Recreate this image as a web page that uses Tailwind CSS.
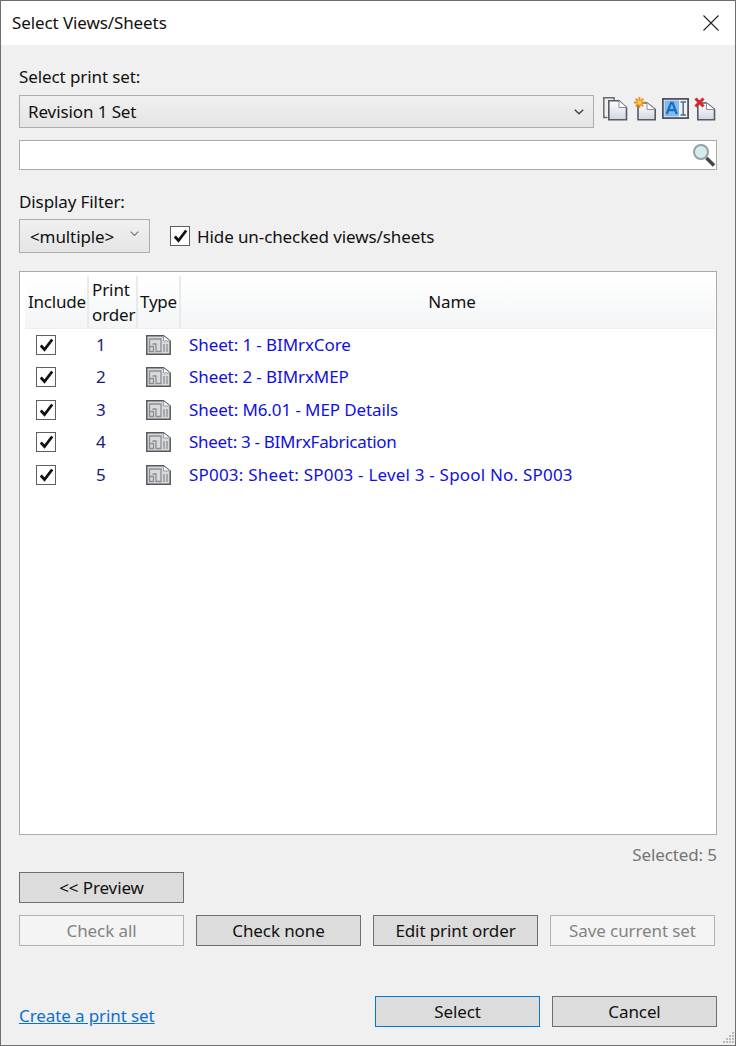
<!DOCTYPE html>
<html>
<head>
<meta charset="utf-8">
<script src="https://cdn.jsdelivr.net/npm/@tailwindcss/browser@4"></script>
</head>
<body class="m-0">
<div class="relative w-[736px] h-[1046px] overflow-hidden bg-[#f0f0f0] border border-[#6e6e6e] font-['Noto_Sans',sans-serif] text-[17px] leading-[22px] text-[#111] tracking-[-0.1px]">
  <header class="h-[44px] bg-white flex items-center justify-between pl-[11px] pr-[15px]">
    <span>Select Views/Sheets</span>
    <svg width="18" height="18" viewBox="0 0 18 18" stroke="#222" stroke-width="1.100" fill="none"><path d="M1.500 1.500 16.500 16.500M16.500 1.500 1.500 16.500"/></svg>
  </header>
  <main class="pl-[18px] pr-[18px] flex flex-col">
    <label class="mt-[21px] h-[22px]">Select print set:</label>
    <div class="mt-[7px] flex h-[33px] items-start">
      <div class="w-[575px] h-[33px] border border-[#adadad] bg-gradient-to-b from-[#f0f0f0] to-[#e5e5e5] flex items-center justify-between pl-[8px] pr-[9px]">
        <span class="mt-[1px]">Revision 1 Set</span>
        <svg width="10" height="6" viewBox="0 0 10 6" fill="none" stroke="#444" stroke-width="1.500"><path d="M.8.8 5 4.800 9.200.8"/></svg>
      </div>
      <div class="ml-[9px] pt-[2px] flex items-start">
        <!-- copy -->
        <svg width="25" height="24" viewBox="0 0 25 24" fill="none">
          <defs><linearGradient id="pg" x1="0" y1="0" x2="0" y2="1"><stop offset="0" stop-color="#fff"/><stop offset="1" stop-color="#d2d6e0"/></linearGradient></defs>
          <path d="M4.500 20.500H.8V.8H11V3" stroke="#6a6a6a" stroke-width="1.500"/>
          <path d="M5.800 3.800H16L23.500 10.500V22.800H5.800Z" fill="url(#pg)" stroke="#555c66" stroke-width="1.600"/>
          <path d="M16 3.800V10.500H23.500" stroke="#8a8f98" stroke-width="1" fill="#fff"/>
        </svg>
        <!-- new -->
        <svg width="23" height="24" viewBox="0 0 23 24" fill="none" class="ml-[6px]">
          <path d="M4 6H13L21.200 12.500V22.800H4Z" fill="url(#pg)" stroke="#555c66" stroke-width="1.600"/>
          <path d="M13 6V12.500H21.200" stroke="#8a8f98" fill="#fff"/>
          <path d="M5.500 0V11M0 5.500H11M1.700 1.700 9.300 9.300M9.300 1.700 1.700 9.300" stroke="#f08a12" stroke-width="1.800"/>
          <circle cx="5.500" cy="5.500" r="2.600" fill="#fbd36a" stroke="#f5941c"/>
        </svg>
        <!-- rename -->
        <svg width="27" height="21" viewBox="0 0 27 21" fill="none" class="ml-[5px] mt-[1px]">
          <rect x=".9" y=".9" width="25.200" height="19.200" fill="#eef1f5" stroke="#4d5560" stroke-width="1.800"/>
          <rect x="2.500" y="2.500" width="14.500" height="16" fill="#82bbed"/>
          <path d="M4.800 16 9 4.800H10.600L14.800 16M6.300 12.200H13.300" stroke="#1a6ec0" stroke-width="2.300"/>
          <path d="M18.500 4H24M18.500 17H24M21.200 4V17" stroke="#5b6a78" stroke-width="1.500"/>
        </svg>
        <!-- delete -->
        <svg width="22" height="24" viewBox="0 0 22 24" fill="none" class="ml-[5px]">
          <path d="M3.800 6H12.500L20.500 12.500V22.800H3.800Z" fill="url(#pg)" stroke="#555c66" stroke-width="1.600"/>
          <path d="M12.500 6V12.500H20.500" stroke="#8a8f98" fill="#fff"/>
          <path d="M1.500 1.500 9.500 9.500M9.500 1.500 1.500 9.500" stroke="#d9252a" stroke-width="3"/>
        </svg>
      </div>
    </div>
    <div class="mt-[12px] h-[30px] w-[698px] bg-white border border-[#ababab] flex items-start justify-end overflow-hidden">
      <svg width="26" height="26" viewBox="0 0 26 26" fill="none" class="mt-[1px]">
        <circle cx="11" cy="10" r="7" fill="#d4ecee" stroke="#9a9fa1" stroke-width="2"/>
        <path d="M16.500 16 24 23.500" stroke="#474747" stroke-width="3.500"/>
      </svg>
    </div>
    <label class="mt-[21px] h-[22px]">Display Filter:</label>
    <div class="mt-[6px] flex items-center h-[34px]">
      <div class="w-[131px] h-[34px] border border-[#adadad] bg-gradient-to-b from-[#f0f0f0] to-[#e5e5e5] flex items-center pl-[10px] relative">
        <span class="mt-[2px]">&lt;multiple&gt;</span>
        <svg width="9" height="6" viewBox="0 0 9 6" fill="none" stroke="#777" stroke-width="1.200" class="absolute right-[10px] top-[11px]"><path d="M.7.7 4.500 4.500 8.300.7"/></svg>
      </div>
      <div class="ml-[20px] w-[20px] h-[20px] bg-white border border-[#5f5f5f] flex items-center justify-center">
        <svg width="15" height="14" viewBox="0 0 15 14" fill="none" stroke="#111" stroke-width="2.800"><path d="M1.800 7.500 5.500 11.500 13.200 1.500"/></svg>
      </div>
      <span class="ml-[7px] mt-[1px]">Hide un-checked views/sheets</span>
    </div>
    <section class="mt-[18px] w-[698px] h-[564px] bg-white border border-[#ababab] pl-[5px] pr-[1px] pt-[4px]">
      <div class="h-[53px] flex items-stretch bg-gradient-to-b from-white to-[#f3f5f6] border-b border-[#eceef0]">
        <div class="w-[64px] flex items-center pl-[3px] tracking-[-0.2px] border-r-2 border-[#e8eaec]">Include</div>
        <div class="w-[49px] pl-[3px] flex flex-col justify-center leading-[25px] border-r-2 border-[#e8eaec]"><span>Print</span><span>order</span></div>
        <div class="w-[43px] flex items-center justify-center tracking-[-0.2px] border-r-2 border-[#e8eaec]">Type</div>
        <div class="flex-1 flex items-center justify-center pl-[8px]">Name</div>
      </div>
      <ul class="-mt-[0.5px]">
        <li class="h-[32.500px] flex items-center">
          <span class="w-[62px] pl-[11px]"><span class="w-[20px] h-[20px] bg-white border border-[#5f5f5f] flex items-center justify-center"><svg width="15" height="14" viewBox="0 0 15 14" fill="none" stroke="#111" stroke-width="2.800"><path d="M1.800 7.500 5.500 11.500 13.200 1.500"/></svg></span></span>
          <span class="w-[49px] pl-[9px] text-[#1a1a78]">1</span>
          <span class="w-[44px] flex justify-center"><svg width="25" height="20" viewBox="0 0 25 20" fill="none"><path d="M.8.8H17.500L24.200 6V19.200H.8Z" fill="#d9dadc" stroke="#55595e" stroke-width="1.500"/><path d="M17.500 1V6H24" stroke="#9a9da1" fill="#f5f5f5"/><path d="M3.500 16.500V4H15V16.500H10V9H6.500" stroke="#8a8e93" stroke-width="1.300"/><path d="M3.500 11.500H7.500V16.500H3.500ZM18 9V17M21 9V17" stroke="#8a8e93" stroke-width="1.300"/></svg></span>
          <span class="ml-[9px] text-[#1010e0] whitespace-nowrap">Sheet: 1 - BIMrxCore</span>
        </li>
        <li class="h-[32.500px] flex items-center">
          <span class="w-[62px] pl-[11px]"><span class="w-[20px] h-[20px] bg-white border border-[#5f5f5f] flex items-center justify-center"><svg width="15" height="14" viewBox="0 0 15 14" fill="none" stroke="#111" stroke-width="2.800"><path d="M1.800 7.500 5.500 11.500 13.200 1.500"/></svg></span></span>
          <span class="w-[49px] pl-[9px] text-[#1a1a78]">2</span>
          <span class="w-[44px] flex justify-center"><svg width="25" height="20" viewBox="0 0 25 20" fill="none"><path d="M.8.8H17.500L24.200 6V19.200H.8Z" fill="#d9dadc" stroke="#55595e" stroke-width="1.500"/><path d="M17.500 1V6H24" stroke="#9a9da1" fill="#f5f5f5"/><path d="M3.500 16.500V4H15V16.500H10V9H6.500" stroke="#8a8e93" stroke-width="1.300"/><path d="M3.500 11.500H7.500V16.500H3.500ZM18 9V17M21 9V17" stroke="#8a8e93" stroke-width="1.300"/></svg></span>
          <span class="ml-[9px] text-[#1010e0] whitespace-nowrap">Sheet: 2 - BIMrxMEP</span>
        </li>
        <li class="h-[32.500px] flex items-center">
          <span class="w-[62px] pl-[11px]"><span class="w-[20px] h-[20px] bg-white border border-[#5f5f5f] flex items-center justify-center"><svg width="15" height="14" viewBox="0 0 15 14" fill="none" stroke="#111" stroke-width="2.800"><path d="M1.800 7.500 5.500 11.500 13.200 1.500"/></svg></span></span>
          <span class="w-[49px] pl-[9px] text-[#1a1a78]">3</span>
          <span class="w-[44px] flex justify-center"><svg width="25" height="20" viewBox="0 0 25 20" fill="none"><path d="M.8.8H17.500L24.200 6V19.200H.8Z" fill="#d9dadc" stroke="#55595e" stroke-width="1.500"/><path d="M17.500 1V6H24" stroke="#9a9da1" fill="#f5f5f5"/><path d="M3.500 16.500V4H15V16.500H10V9H6.500" stroke="#8a8e93" stroke-width="1.300"/><path d="M3.500 11.500H7.500V16.500H3.500ZM18 9V17M21 9V17" stroke="#8a8e93" stroke-width="1.300"/></svg></span>
          <span class="ml-[9px] text-[#1010e0] whitespace-nowrap">Sheet: M6.01 - MEP Details</span>
        </li>
        <li class="h-[32.500px] flex items-center">
          <span class="w-[62px] pl-[11px]"><span class="w-[20px] h-[20px] bg-white border border-[#5f5f5f] flex items-center justify-center"><svg width="15" height="14" viewBox="0 0 15 14" fill="none" stroke="#111" stroke-width="2.800"><path d="M1.800 7.500 5.500 11.500 13.200 1.500"/></svg></span></span>
          <span class="w-[49px] pl-[9px] text-[#1a1a78]">4</span>
          <span class="w-[44px] flex justify-center"><svg width="25" height="20" viewBox="0 0 25 20" fill="none"><path d="M.8.8H17.500L24.200 6V19.200H.8Z" fill="#d9dadc" stroke="#55595e" stroke-width="1.500"/><path d="M17.500 1V6H24" stroke="#9a9da1" fill="#f5f5f5"/><path d="M3.500 16.500V4H15V16.500H10V9H6.500" stroke="#8a8e93" stroke-width="1.300"/><path d="M3.500 11.500H7.500V16.500H3.500ZM18 9V17M21 9V17" stroke="#8a8e93" stroke-width="1.300"/></svg></span>
          <span class="ml-[9px] text-[#1010e0] whitespace-nowrap tracking-[-0.3px]">Sheet: 3 - BIMrxFabrication</span>
        </li>
        <li class="h-[32.500px] flex items-center">
          <span class="w-[62px] pl-[11px]"><span class="w-[20px] h-[20px] bg-white border border-[#5f5f5f] flex items-center justify-center"><svg width="15" height="14" viewBox="0 0 15 14" fill="none" stroke="#111" stroke-width="2.800"><path d="M1.800 7.500 5.500 11.500 13.200 1.500"/></svg></span></span>
          <span class="w-[49px] pl-[9px] text-[#1a1a78]">5</span>
          <span class="w-[44px] flex justify-center"><svg width="25" height="20" viewBox="0 0 25 20" fill="none"><path d="M.8.8H17.500L24.200 6V19.200H.8Z" fill="#d9dadc" stroke="#55595e" stroke-width="1.500"/><path d="M17.500 1V6H24" stroke="#9a9da1" fill="#f5f5f5"/><path d="M3.500 16.500V4H15V16.500H10V9H6.500" stroke="#8a8e93" stroke-width="1.300"/><path d="M3.500 11.500H7.500V16.500H3.500ZM18 9V17M21 9V17" stroke="#8a8e93" stroke-width="1.300"/></svg></span>
          <span class="ml-[9px] text-[#1010e0] whitespace-nowrap tracking-[0.2px]">SP003: Sheet: SP003 - Level 3 - Spool No. SP003</span>
        </li>
      </ul>
    </section>
    <div class="mt-[9px] h-[22px] w-[698px] text-right text-[#757575]">Selected: 5</div>
    <button class="mt-[6px] w-[165px] h-[31px] bg-[#dcdcdc] border border-[#6f6f6f] flex items-center justify-center">&lt;&lt; Preview</button>
    <div class="mt-[12px] flex gap-[12px]">
      <button class="w-[165px] h-[31px] bg-[#f4f4f4] border border-[#adb2b5] text-[#838383] flex items-center justify-center">Check all</button>
      <button class="w-[165px] h-[31px] bg-[#dcdcdc] border border-[#6f6f6f] flex items-center justify-center">Check none</button>
      <button class="w-[165px] h-[31px] bg-[#dcdcdc] border border-[#6f6f6f] flex items-center justify-center">Edit print order</button>
      <button class="w-[165px] h-[31px] bg-[#f4f4f4] border border-[#adb2b5] text-[#838383] flex items-center justify-center">Save current set</button>
    </div>
    <div class="mt-[50px] w-[698px] flex items-center">
      <a class="text-[#0a6fd6] underline mt-[8px]">Create a print set</a>
      <div class="ml-auto flex gap-[12px]">
        <button class="w-[165px] h-[31px] bg-[#dcdcdc] border border-[#0078d7] flex items-center justify-center">Select</button>
        <button class="w-[165px] h-[31px] bg-[#dcdcdc] border border-[#6f6f6f] flex items-center justify-center">Cancel</button>
      </div>
    </div>
  </main>
  <svg width="14" height="14" viewBox="0 0 14 14" class="absolute right-0 bottom-0" fill="#bcbcbc"><rect x="11" y="1" width="2" height="2"/><rect x="8" y="4" width="2" height="2"/><rect x="11" y="4" width="2" height="2"/><rect x="5" y="7" width="2" height="2"/><rect x="8" y="7" width="2" height="2"/><rect x="11" y="7" width="2" height="2"/><rect x="2" y="10" width="2" height="2"/><rect x="5" y="10" width="2" height="2"/><rect x="8" y="10" width="2" height="2"/><rect x="11" y="10" width="2" height="2"/></svg>
</div>
</body>
</html>
